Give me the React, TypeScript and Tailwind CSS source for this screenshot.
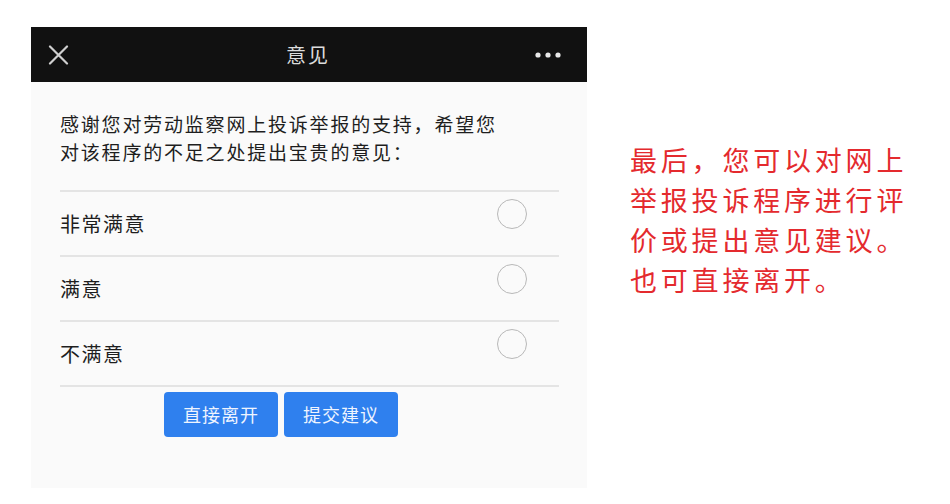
import React from "react";

const font = { fontFamily: '"Noto Sans CJK SC", "Noto Sans", sans-serif' };

function Row({ label }: { label: string }) {
  return (
    <div className="flex h-[65px] justify-between border-t-2 border-[#e4e4e4]">
      <div className="flex items-center text-[20px] tracking-[1.5px] text-[#1e1e1e]">{label}</div>
      <div className="mr-[32px] mt-[7px] h-[30px] w-[30px] rounded-full border-[1.5px] border-[#b8b8b8]" />
    </div>
  );
}

export default function App() {
  return (
    <div className="flex h-[504px] w-[950px] items-start bg-white pl-[31px] pt-[27px]" style={font}>
      <div className="flex h-[461px] w-[556px] flex-col bg-[#fafafa]">
        <div className="flex h-[55px] items-center justify-between bg-[#111111] pl-[17px] pr-[26px]">
          <svg width="21" height="20" viewBox="0 0 21 20">
            <path d="M2 1.5 L19 18.5 M19 1.5 L2 18.5" stroke="#d0d0d0" strokeWidth="2.2" strokeLinecap="round" />
          </svg>
          <div className="ml-[12px] text-[20px] tracking-[2px] text-[#dcdcdc]">意见</div>
          <svg width="26" height="6" viewBox="0 0 26 6">
            <circle cx="3" cy="3" r="2.6" fill="#e8e8e8" />
            <circle cx="13" cy="3" r="2.6" fill="#e8e8e8" />
            <circle cx="23" cy="3" r="2.6" fill="#e8e8e8" />
          </svg>
        </div>
        <div className="flex flex-col pl-[29px] pr-[28px]">
          <div className="mt-[28px] text-[19px] leading-[28px] tracking-[1.8px] text-[#1e1e1e]">
            <div>感谢您对劳动监察网上投诉举报的支持，希望您</div>
            <div>对该程序的不足之处提出宝贵的意见：</div>
          </div>
          <div className="mt-[24px] border-b-2 border-[#e4e4e4]">
            <Row label="非常满意" />
            <Row label="满意" />
            <Row label="不满意" />
          </div>
          <div className="ml-[104px] mt-[5px] flex gap-[6px]">
            <button className="flex h-[45px] w-[114px] items-center justify-center rounded-[4px] bg-[#2f80ee] text-[18px] tracking-[1px] text-[#eef4ff]">
              直接离开
            </button>
            <button className="flex h-[45px] w-[114px] items-center justify-center rounded-[4px] bg-[#2f80ee] text-[18px] tracking-[1px] text-[#eef4ff]">
              提交建议
            </button>
          </div>
        </div>
      </div>
      <div className="ml-[43px] mt-[113px] text-[27px] font-normal leading-[40px] tracking-[3.8px] text-[#e42a2e]">
        <div>最后，您可以对网上</div>
        <div>举报投诉程序进行评</div>
        <div>价或提出意见建议。</div>
        <div>也可直接离开。</div>
      </div>
    </div>
  );
}
